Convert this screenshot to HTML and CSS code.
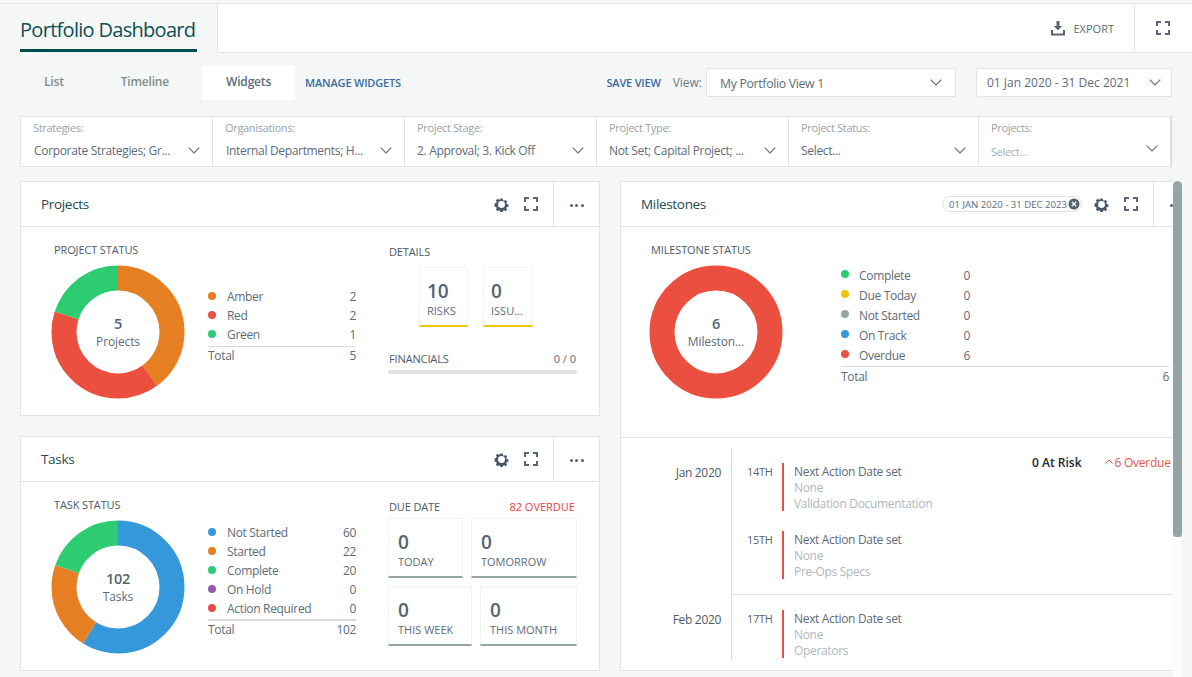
FILE: index.html
```html
<!DOCTYPE html>
<html lang="en">
<head>
<meta charset="utf-8">
<title>Portfolio Dashboard</title>
<link rel="stylesheet" href="styles.css">
</head>
<body>
<svg class="defs" width="0" height="0" aria-hidden="true">
  <symbol id="gear" viewBox="0 0 16 16">
    <path d="M6.6 0.6h2.8l.4 2 1.5.7 1.8-1.1 2 2-1.1 1.8.7 1.5 2 .4v2.8l-2 .4-.7 1.5 1.1 1.8-2 2-1.8-1.1-1.5.7-.4 2H6.6l-.4-2-1.5-.7-1.8 1.1-2-2 1.1-1.8-.7-1.5-2-.4V6.6l2-.4.7-1.5-1.1-1.8 2-2 1.8 1.1 1.5-.7z" transform="translate(1.2 1.2) scale(.85)"/>
    <circle cx="8" cy="8" r="3.7" fill="#fff"/>
  </symbol>
  <symbol id="full" viewBox="0 0 14 14">
    <path d="M1 5V1h4M9 1h4v4M13 9v4H9M5 13H1V9" fill="none" stroke="currentColor" stroke-width="2"/>
  </symbol>
  <symbol id="chev" viewBox="0 0 12 7">
    <path d="M.7.7 6 6l5.300-5.300" fill="none" stroke="currentColor" stroke-width="1.100"/>
  </symbol>
</svg>

<header class="topbar">
  <div class="title-wrap"><h1 class="page-title">Portfolio Dashboard</h1></div>
  <div class="top-actions">
    <button class="export">
      <svg class="export-icon" viewBox="0 0 16 16"><path d="M6.500 1h3v5h2.800L8 10.300 3.700 6h2.800zM1 10h2v3.500h10V10h2v5.500H1z"/></svg>
      <span>EXPORT</span>
    </button>
    <div class="top-full"><svg class="ico full-top"><use href="#full"/></svg></div>
  </div>
</header>

<nav class="toolbar">
  <div class="tabs">
    <span class="tab">List</span>
    <span class="tab">Timeline</span>
    <span class="tab tab-active">Widgets</span>
  </div>
  <a class="link manage">MANAGE WIDGETS</a>
  <a class="link save">SAVE VIEW</a>
  <span class="view-label">View:</span>
  <div class="select select-view"><span>My Portfolio View 1</span><svg class="chev"><use href="#chev"/></svg></div>
  <div class="select select-date"><span>01 Jan 2020 - 31 Dec 2021</span><svg class="chev"><use href="#chev"/></svg></div>
</nav>

<section class="filters">
  <div class="filter"><label>Strategies:</label><div class="fval"><span>Corporate Strategies; Gr...</span><svg class="chev"><use href="#chev"/></svg></div></div>
  <div class="filter"><label>Organisations:</label><div class="fval"><span>Internal Departments; H...</span><svg class="chev"><use href="#chev"/></svg></div></div>
  <div class="filter"><label>Project Stage:</label><div class="fval"><span>2. Approval; 3. Kick Off</span><svg class="chev"><use href="#chev"/></svg></div></div>
  <div class="filter"><label>Project Type:</label><div class="fval"><span>Not Set; Capital Project; ...</span><svg class="chev"><use href="#chev"/></svg></div></div>
  <div class="filter"><label>Project Status:</label><div class="fval"><span>Select...</span><svg class="chev"><use href="#chev"/></svg></div></div>
  <div class="filter filter-last"><label>Projects:</label><div class="fval"><span>Select...</span><svg class="chev"><use href="#chev"/></svg></div></div>
</section>

<main class="board">
  <div class="left-col">
    <article class="card">
      <div class="card-head">
        <h2>Projects</h2>
        <svg class="ico gear"><use href="#gear"/></svg>
        <svg class="ico full"><use href="#full"/></svg>
        <div class="menu"><i></i><i></i><i></i></div>
      </div>
      <div class="card-body">
        <div class="status">
          <h3 class="status-title">PROJECT STATUS</h3>
          <div class="status-row">
            <div class="donut">
              <svg viewBox="0 0 134 134">
                <circle class="seg" cx="67" cy="67" r="54" pathLength="100" stroke="#e67e22" stroke-dasharray="40 60" stroke-dashoffset="0"/>
                <circle class="seg" cx="67" cy="67" r="54" pathLength="100" stroke="#ea4f3f" stroke-dasharray="40 60" stroke-dashoffset="-40"/>
                <circle class="seg" cx="67" cy="67" r="54" pathLength="100" stroke="#2ecc71" stroke-dasharray="20 80" stroke-dashoffset="-80"/>
              </svg>
              <div class="donut-text"><b>5</b><span>Projects</span></div>
            </div>
            <ul class="legend legend-p">
              <li><i class="dot amber"></i><span>Amber</span><em>2</em></li>
              <li><i class="dot red"></i><span>Red</span><em>2</em></li>
              <li><i class="dot green"></i><span>Green</span><em>1</em></li>
              <li class="total"><span>Total</span><em>5</em></li>
            </ul>
          </div>
        </div>
        <div class="side">
          <div class="side-title side-title-details"><h3>DETAILS</h3></div>
          <div class="detail-tiles">
            <div class="tile tile-y tile-risk"><b>10</b><span>RISKS</span></div>
            <div class="tile tile-y tile-issue"><b>0</b><span>ISSU...</span></div>
          </div>
          <div class="side-title fin"><h3>FINANCIALS</h3><span>0 / 0</span></div>
          <div class="bar"></div>
        </div>
      </div>
    </article>

    <article class="card">
      <div class="card-head">
        <h2>Tasks</h2>
        <svg class="ico gear"><use href="#gear"/></svg>
        <svg class="ico full"><use href="#full"/></svg>
        <div class="menu"><i></i><i></i><i></i></div>
      </div>
      <div class="card-body">
        <div class="status">
          <h3 class="status-title">TASK STATUS</h3>
          <div class="status-row">
            <div class="donut">
              <svg viewBox="0 0 134 134">
                <circle class="seg" cx="67" cy="67" r="54" pathLength="102" stroke="#3498db" stroke-dasharray="60 42" stroke-dashoffset="0"/>
                <circle class="seg" cx="67" cy="67" r="54" pathLength="102" stroke="#e67e22" stroke-dasharray="22 80" stroke-dashoffset="-60"/>
                <circle class="seg" cx="67" cy="67" r="54" pathLength="102" stroke="#2ecc71" stroke-dasharray="20 82" stroke-dashoffset="-82"/>
              </svg>
              <div class="donut-text"><b>102</b><span>Tasks</span></div>
            </div>
            <ul class="legend legend-t">
              <li><i class="dot blue"></i><span>Not Started</span><em>60</em></li>
              <li><i class="dot amber"></i><span>Started</span><em>22</em></li>
              <li><i class="dot green"></i><span>Complete</span><em>20</em></li>
              <li><i class="dot purple"></i><span>On Hold</span><em>0</em></li>
              <li><i class="dot red"></i><span>Action Required</span><em>0</em></li>
              <li class="total"><span>Total</span><em>102</em></li>
            </ul>
          </div>
        </div>
        <div class="side">
          <div class="side-title side-title-due"><h3>DUE DATE</h3><span class="overdue">82 OVERDUE</span></div>
          <div class="due-grid due-a">
            <div class="tile tile-g"><b>0</b><span>TODAY</span></div>
            <div class="tile tile-g"><b>0</b><span>TOMORROW</span></div>
          </div>
          <div class="due-grid due-b">
            <div class="tile tile-g"><b>0</b><span>THIS WEEK</span></div>
            <div class="tile tile-g"><b>0</b><span>THIS MONTH</span></div>
          </div>
        </div>
      </div>
    </article>
  </div>

  <div class="right-col">
    <div class="clip">
      <article class="card card-ms">
        <div class="card-head">
          <h2>Milestones</h2>
          <div class="chip"><span>01 JAN 2020 - 31 DEC 2023</span><svg class="chip-x" viewBox="0 0 12 12"><circle cx="6" cy="6" r="5.500"/><path d="M3.800 3.800l4.400 4.400M8.200 3.800 3.800 8.200"/></svg></div>
          <svg class="ico gear"><use href="#gear"/></svg>
          <svg class="ico full"><use href="#full"/></svg>
          <div class="menu"><i></i><i></i><i></i></div>
        </div>
        <div class="card-body ms-top">
          <div class="status">
            <h3 class="status-title">MILESTONE STATUS</h3>
            <div class="status-row">
              <div class="donut">
                <svg viewBox="0 0 134 134">
                  <circle class="seg" cx="67" cy="67" r="54" stroke="#ea4f3f"/>
                </svg>
                <div class="donut-text"><b>6</b><span>Mileston...</span></div>
              </div>
              <ul class="legend legend-m">
                <li><i class="dot green"></i><span>Complete</span><em>0</em></li>
                <li><i class="dot yellow"></i><span>Due Today</span><em>0</em></li>
                <li><i class="dot gray"></i><span>Not Started</span><em>0</em></li>
                <li><i class="dot blue"></i><span>On Track</span><em>0</em></li>
                <li><i class="dot red"></i><span>Overdue</span><em>6</em></li>
                <li class="total"><span>Total</span><em>6</em></li>
              </ul>
            </div>
          </div>
        </div>
        <div class="timeline">
          <div class="tl-summary"><strong>0 At Risk</strong><span><svg class="caret" viewBox="0 0 8 5"><path d="M.5 4.500 4 1l3.500 3.500"/></svg>6 Overdue</span></div>
          <div class="tl-group tl-first">
            <div class="tl-month">Jan 2020</div>
            <div class="tl-items">
              <div class="tl-item">
                <div class="tl-day">14TH</div>
                <div class="tl-text"><p>Next Action Date set</p><p class="mute">None</p><p class="mute">Validation Documentation</p></div>
              </div>
              <div class="tl-item">
                <div class="tl-day">15TH</div>
                <div class="tl-text"><p>Next Action Date set</p><p class="mute">None</p><p class="mute">Pre-Ops Specs</p></div>
              </div>
            </div>
          </div>
          <div class="tl-group tl-second">
            <div class="tl-month">Feb 2020</div>
            <div class="tl-items">
              <div class="tl-item">
                <div class="tl-day">17TH</div>
                <div class="tl-text"><p>Next Action Date set</p><p class="mute">None</p><p class="mute">Operators</p></div>
              </div>
            </div>
          </div>
        </div>
      </article>
    </div>
    <div class="scroll-track"><div class="scroll-thumb"></div></div>
  </div>
</main>
</body>
</html>
```

FILE: styles.css
```css
* { box-sizing: border-box; }
html, body { margin: 0; height: 677px; overflow: hidden; }
body {
  background: #f5f7f7;
  font-family: "Open Sans", "Noto Sans", "Liberation Sans", sans-serif;
  font-size: 12px;
  letter-spacing: -0.027em;
  color: #5d6b78;
  padding-top: 3px;
}
h1, h2, h3, p, ul { margin: 0; padding: 0; font-weight: 400; }
ul { list-style: none; }
i, em { font-style: normal; }
.defs { position: absolute; }
.ico { width: 14px; height: 14px; color: #55667a; fill: #47586b; flex: none; }
.chev { width: 12px; height: 7px; color: #5d6b78; flex: none; }

/* top bar */
.topbar { display: flex; height: 50px; border-top: 1px solid #e4e6e6; }
.title-wrap { width: 217px; padding-left: 20px; flex: none; }
.page-title {
  display: block;
  width: 177px;
  height: 48px;
  font-size: 20px;
  letter-spacing: -0.035em;
  line-height: 52px;
  color: #0d4f55;
  white-space: nowrap;
  border-bottom: 3px solid #004d4d;
}
.top-actions {
  flex: 1;
  display: flex;
  justify-content: flex-end;
  background: #fff;
  border-left: 1px solid #e1e4e4;
  border-bottom: 1px solid #e1e4e4;
}
.export {
  display: flex;
  align-items: center;
  gap: 8px;
  padding: 0 20px 0 0;
  border: 0;
  background: none;
  font: inherit;
  font-size: 11px;
  letter-spacing: 0;
  color: #5d6b78;
}
.export-icon { width: 16px; height: 16px; fill: #5b6672; }
.top-full {
  width: 58px;
  display: flex;
  align-items: center;
  justify-content: center;
  padding-right: 2px;
  border-left: 1px solid #e8eaea;
}

/* toolbar */
.toolbar { display: flex; align-items: center; height: 35px; margin-top: 12px; padding-left: 20px; padding-right: 20px; }
.tabs { display: flex; height: 35px; gap: 9px; }
.tab { padding: 0 24px; line-height: 33px; font-size: 12px; font-weight: 600; letter-spacing: -0.015em; color: #7f8c8d; }
.tab-active { background: #fff; color: #5d6b78; border-radius: 2px; }
.link { font-size: 11px; font-weight: 600; letter-spacing: -0.018em; color: #3a6b9e; white-space: nowrap; }
.manage { margin-left: 10px; }
.save { margin-left: auto; }
.view-label { margin-left: 12px; margin-right: 4px; letter-spacing: 0; color: #6d7a85; }
.select {
  display: flex;
  align-items: center;
  justify-content: space-between;
  height: 29px;
  background: #fff;
  border: 1px solid #e1e4e4;
  border-radius: 2px;
  white-space: nowrap;
}
.select-view { width: 250px; padding: 0 13px; font-size: 12.300px; }
.select-view span { padding-top: 2px; }
.select-date { width: 196px; margin-left: 20px; padding: 0 10px; letter-spacing: 0; }

/* filters */
.filters {
  display: grid;
  grid-template-columns: 192px 192px 192px 192px 190px 1fr;
  height: 51px;
  margin: 16px 20px 0;
  background: #fff;
  border: 1px solid #e1e4e4;
  border-right: 2px solid #dcdfdf;
}
.filter { padding: 4px 12px 0 12px; border-right: 1px solid #e1e4e4; }
.filter label { display: block; font-size: 11px; line-height: 14px; color: #98a2a8; }
.fval { display: flex; align-items: center; justify-content: space-between; margin-top: 7px; line-height: 17px; padding-left: 1px; white-space: nowrap; }
.filter:nth-child(n+3) .fval { padding-left: 0; }
.filter-last { border-right: 0; }
.filter-last .fval { margin-top: 5px; }
.filter-last .fval span { color: #a5adb3; font-size: 11px; position: relative; top: 3px; }

/* board */
.board { display: flex; gap: 20px; margin-top: 14px; padding-left: 20px; }
.left-col { width: 580px; display: flex; flex-direction: column; gap: 20px; flex: none; }
.right-col { display: flex; align-items: stretch; height: 496px; }
.clip { width: 553px; height: 490px; overflow: hidden; }
.scroll-track { width: 9px; background: #fdfdfd; height: 496px; }
.scroll-thumb { height: 356px; background: #95a5a6; border-radius: 5px 5px 4px 4px; }

.card { background: #fff; border: 1px solid #e1e4e4; height: 235px; }
.card-ms { width: 580px; height: 490px; }
.card-head { display: flex; align-items: center; height: 45px; padding-left: 20px; border-bottom: 1px solid #e1e4e4; }
.card-head h2 { flex: 1; font-size: 13.500px; color: #1f4a50; }
.gear { width: 15px; height: 15px; margin-right: 15px; }
.full { margin-right: 15px; }
.menu { width: 46px; height: 44px; padding-top: 2px; display: flex; align-items: center; justify-content: center; gap: 2.500px; border-left: 1px solid #e8eaea; }
.menu i { width: 3px; height: 3px; border-radius: 50%; background: #4f6072; }
.chip {
  display: flex; align-items: center;
  width: 140px; height: 16px;
  margin-right: 12px;
  padding-left: 6px;
  border: 1px solid #dde0e0;
  border-radius: 8px;
  font-size: 9.600px;
  letter-spacing: 0;
  white-space: nowrap;
  color: #5d6b78;
}
.chip-x { width: 12px; height: 12px; flex: none; margin-left: auto; margin-right: 1px; }
.chip-x circle { fill: #54616e; }
.chip-x path { stroke: #fff; stroke-width: 1.300; fill: none; }

.card-body { display: flex; padding-top: 15px; }
.status { width: 367px; padding-left: 30px; flex: none; }
.status-title { margin-left: 3px; font-size: 11px; line-height: 16px; font-weight: 500; letter-spacing: -0.012em; color: #4d5a65; }
.status-row { display: flex; margin-top: 7px; }
.donut { position: relative; width: 134px; height: 134px; flex: none; }
.donut svg { display: block; width: 134px; height: 134px; transform: rotate(-90deg); }
.seg { fill: none; stroke-width: 25; }
.donut-text {
  position: absolute; left: 27px; right: 27px; top: 50px;
  display: flex; flex-direction: column; align-items: center;
  text-align: center;
}
.donut-text b { font-size: 14.500px; line-height: 18px; font-weight: 600; color: #56646f; }
.donut-text span { font-size: 12px; line-height: 18px; letter-spacing: -0.01em; white-space: nowrap; }

.legend { margin-left: 23px; width: 148px; padding-top: 22px; }
.legend li { display: flex; align-items: center; height: 19px; }
.legend .dot { width: 8px; height: 8px; border-radius: 50%; margin-right: 11px; flex: none; position: relative; top: -1px; }
.legend span { flex: 1; white-space: nowrap; }
.legend em { text-align: right; }
.legend li.total { margin-top: 2px; height: 17px; border-top: 1px solid #d8dbdb; padding-top: 0; }
.legend-t { padding-top: 3px; }
.legend-t li.total { margin-top: 1px; height: 19px; border-top-width: 2px; padding-top: 0; }
.legend-m { width: 328px; margin-left: 58px; padding-top: 0; }
.legend-m li { height: 20px; }
.legend-m li em { width: 20px; margin-right: 199px; }
.legend-m .dot { margin-right: 10px; }
.legend-m li.total { margin-top: 1px; height: 20px; }
.legend-m li.total em { margin-right: 0; }

.amber { background: #e67e22; }
.red { background: #ea4f3f; }
.green { background: #2ecc71; }
.blue { background: #3498db; }
.purple { background: #9b59b6; }
.yellow { background: #f1c40f; }
.gray { background: #95a5a6; }

.side { width: 189px; flex: none; }
.side-title { display: flex; justify-content: space-between; align-items: center; height: 16px; margin-top: 1px; padding-left: 1px; }
.side-title h3 { font-size: 11px; font-weight: 500; letter-spacing: -0.012em; color: #4d5a65; }
.detail-tiles { display: flex; gap: 15px; margin-left: 31px; margin-top: 8px; }
.tile {
  height: 60px;
  background: #fff;
  border: 1px solid #f0f1f1;
  border-bottom: 2px solid #95a5a6;
  padding: 11px 0 0 9px;
  display: flex;
  flex-direction: column;
}
.tile b { font-size: 19px; line-height: 24px; font-weight: 600; letter-spacing: 0; color: #56646f; }
.tile span { font-size: 11px; line-height: 16px; letter-spacing: 0; font-weight: 500; white-space: nowrap; }
.tile-y { border-bottom-color: #f1c40f; padding-left: 7px; }
.tile-risk { width: 49px; }
.tile-issue { width: 50px; }
.fin { margin-top: 23px; }
.fin span { font-size: 11px; letter-spacing: 0; padding-right: 1px; }
.bar { height: 4px; margin-top: 4px; background: #dfe1e1; border-radius: 2px; }
.side-title-due { padding-right: 2px; }
.overdue { font-size: 11px; color: #e8423a; letter-spacing: 0; }
.due-grid { display: grid; gap: 8px; }
.due-a { grid-template-columns: 75px 106px; margin-top: 4px; }
.due-b { grid-template-columns: 84px 97px; margin-top: 8px; }

/* milestone timeline */
.ms-top { height: 211px; border-bottom: 1px solid #e1e4e4; }
.ms-top .status { width: 100%; padding-left: 28px; }
.ms-top .status-title { margin-left: 2px; }
.timeline { position: relative; padding-top: 10px; }
.tl-summary {
  position: absolute; top: 16px; left: 411px;
  display: flex; gap: 23px;
  letter-spacing: 0;
  white-space: nowrap;
}
.tl-summary strong { font-weight: 600; color: #22282c; }
.tl-summary span { color: #e8554a; letter-spacing: -0.02em; }
.caret { width: 8px; height: 5px; margin-right: 2px; vertical-align: 3px; fill: none; stroke: #e8554a; stroke-width: 1; }
.tl-group { display: flex; }
.tl-month { width: 110px; flex: none; padding: 16px 10px 0 0; text-align: right; color: #4d5a64; line-height: 18px; }
.tl-items { flex: 1; border-left: 1px solid #d8dbdb; padding-left: 15px; display: flex; flex-direction: column; gap: 20px; }
.tl-first .tl-items { padding-top: 15px; padding-bottom: 16px; position: relative; }
.tl-first .tl-items::after { content: ""; position: absolute; left: 0; right: 0; bottom: 0; height: 1px; background: #dfe1e1; }
.tl-second .tl-items { padding-top: 15px; padding-bottom: 2px; }
.tl-item { display: flex; height: 48px; }
.tl-day { width: 35px; flex: none; padding-top: 1px; font-size: 11px; font-weight: 500; color: #56646f; line-height: 16px; }
.tl-text { border-left: 2px solid #ea4f3f; padding: 1px 0 0 10px; line-height: 16px; }
.mute { color: #b0b7bb; }
```
